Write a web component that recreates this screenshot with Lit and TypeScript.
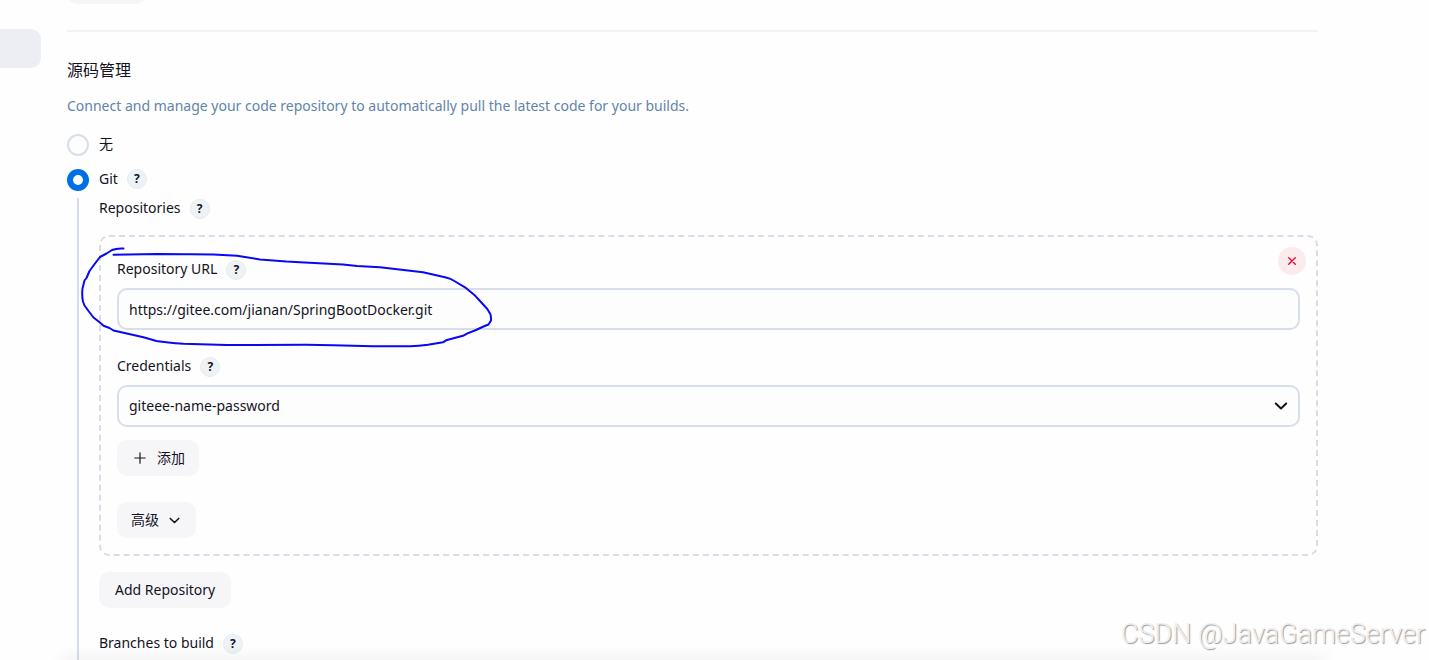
import { LitElement, html, css, svg } from "lit";
import { customElement, property, state } from "lit/decorators.js";

const FONT = css`"Noto Sans", "Noto Sans CJK SC", sans-serif`;

@customElement("help-button")
class HelpButton extends LitElement {
  @property() topic = "";

  static styles = css`
    :host {
      display: block;
    }
    .help {
      display: grid;
      place-items: center;
      box-sizing: border-box;
      width: 20px;
      height: 20px;
      padding: 0;
      border: 1px solid #e6ebef;
      border-radius: 50%;
      background: #eef2f5;
      color: #14141f;
      font: 700 12px/18px ${FONT};
    }
  `;

  render() {
    return html`<button class="help" type="button" aria-label="Help: ${this.topic}">?</button>`;
  }
}

@customElement("app-root")
class AppRoot extends LitElement {
  @state() scm = "git";
  @state() url = "https://gitee.com/jianan/SpringBootDocker.git";

  static styles = css`
    :host {
      display: block;
      position: relative;
      height: 100vh;
      overflow: hidden;
      background: #fefefe;
      color: #14141f;
      font: 400 14px/20px ${FONT};
    }
    .page {
      display: grid;
      grid-template-columns: 41px minmax(0, 1fr);
      column-gap: 26px;
      padding-right: 111px;
    }
    .side {
      padding-top: 29px;
    }
    .side-item {
      display: block;
      height: 39px;
      border-radius: 0 10px 10px 0;
      background: #edeef3;
    }
    .previous {
      display: flex;
      align-items: flex-end;
      height: 4px;
      overflow: hidden;
    }
    .button {
      display: inline-flex;
      flex: none;
      align-items: center;
      box-sizing: border-box;
      height: 36px;
      padding: 0 14px;
      border: 0;
      border-radius: 10px;
      background: #f6f6f9;
      color: inherit;
      font: inherit;
    }
    .button.blank {
      width: 79px;
    }
    .rule {
      height: 2px;
      margin: 26px 0 0;
      border: 0;
      background: #f2f2f7;
    }
    .title {
      margin: 28px 0 0;
      font-size: 16px;
      line-height: 20px;
      font-weight: 400;
    }
    .description {
      margin: 16px 0 0;
      color: #6384a8;
    }
    .choices {
      display: grid;
      gap: 13px;
      margin: 18px 0 0;
      padding: 0;
      border: 0;
    }
    .choice {
      display: flex;
      height: 22px;
    }
    .choice label {
      display: flex;
      gap: 10px;
      margin-right: 9px;
    }
    .radio {
      appearance: none;
      box-sizing: border-box;
      width: 22px;
      height: 22px;
      margin: 0;
      border: 2px solid #d8dee9;
      border-radius: 50%;
      background: #fdfdfe;
    }
    .radio:checked {
      border: 6px solid #006fe6;
      background: #fff;
    }
    .nested {
      margin: 7px 0 0 10px;
      padding: 1px 0 60px 20px;
      border-left: 2px solid #d8dee9;
    }
    .label-row {
      display: flex;
      align-items: center;
      gap: 9px;
      height: 20px;
    }
    .label-row > :first-child {
      line-height: 18px;
      padding-bottom: 2px;
    }
    .repository {
      position: relative;
      margin-top: 16px;
      padding: 23px 16px 16px;
      border: 2px dashed #d8dee9;
      border-radius: 10px;
    }
    .remove {
      position: absolute;
      top: 10px;
      right: 10px;
      display: grid;
      place-items: center;
      width: 28px;
      height: 28px;
      padding: 0;
      border: 0;
      border-radius: 50%;
      background: #fcebed;
      color: #e6002e;
    }
    .field + .field {
      margin-top: 27px;
    }
    .control {
      position: relative;
      display: block;
      margin-top: 8px;
    }
    .input {
      appearance: none;
      display: block;
      box-sizing: border-box;
      width: 100%;
      height: 42px;
      margin: 0;
      padding: 0 10px;
      border: 2px solid #d8dee9;
      border-radius: 10px;
      background: #fdfdfe;
      color: inherit;
      font: inherit;
      outline: 0;
    }
    .arrow {
      position: absolute;
      top: 13px;
      right: 11px;
      pointer-events: none;
    }
    .icon {
      display: block;
      flex: none;
      fill: none;
      stroke: currentColor;
      stroke-linecap: round;
      stroke-linejoin: round;
    }
    .actions {
      display: grid;
      justify-items: start;
      gap: 26px;
      margin-top: 13px;
    }
    .actions .icon {
      margin: 0 1px;
    }
    .actions .button {
      gap: 8px;
    }
    .add-repository {
      margin-top: 16px;
      padding: 0 16px;
    }
    .branches {
      margin-top: 26px;
    }
    .ink {
      position: absolute;
      top: 0;
      left: 0;
      fill: none;
      stroke: #0808f4;
      stroke-width: 2;
      stroke-linecap: round;
      stroke-linejoin: round;
      pointer-events: none;
    }
    .fade {
      position: absolute;
      bottom: 0;
      left: 52px;
      right: 94px;
      height: 14px;
      background: linear-gradient(transparent, rgba(20, 20, 31, 0.035));
      mask-image: linear-gradient(90deg, transparent, #000 20px calc(100% - 20px), transparent);
      pointer-events: none;
    }
    .watermark {
      position: absolute;
      right: 4px;
      bottom: 10px;
      color: #f0f0f0;
      font: 300 27px/32px Roboto, sans-serif;
      text-shadow: 1px 1px 1px #989898;
      pointer-events: none;
    }
  `;

  private chevron(size: number, cls = "") {
    return html`<svg class="icon ${cls}" width=${size} height=${size} viewBox="0 0 16 16" stroke-width="2" aria-hidden="true">
      ${svg`<path d="M2.800 5.500 8 10.500l5.200-5"/>`}
    </svg>`;
  }

  render() {
    return html`
      <div class="page">
        <nav class="side"><a class="side-item" href="#scm" aria-label="源码管理"></a></nav>
        <main>
          <div class="previous"><button class="button blank" type="button" aria-label="高级"></button></div>
          <hr class="rule" />
          <h2 class="title" id="scm">源码管理</h2>
          <p class="description">
            Connect and manage your code repository to automatically pull the latest code for your builds.
          </p>
          <fieldset class="choices" aria-labelledby="scm">
            <div class="choice">
              <label>
                <input class="radio" type="radio" name="scm" .checked=${this.scm === "none"} @change=${() => (this.scm = "none")} />
                <span>无</span>
              </label>
            </div>
            <div class="choice">
              <label>
                <input class="radio" type="radio" name="scm" .checked=${this.scm === "git"} @change=${() => (this.scm = "git")} />
                <span>Git</span>
              </label>
              <help-button topic="Git"></help-button>
            </div>
          </fieldset>
          <div class="nested">
            <div class="label-row"><span>Repositories</span><help-button topic="Repositories"></help-button></div>
            <section class="repository">
              <button class="remove" type="button" aria-label="Delete">
                <svg class="icon" width="10" height="10" viewBox="0 0 10 10" stroke-width="1.300" aria-hidden="true">
                  <path d="M1.700 1.700l6.600 6.600M8.300 1.700 1.700 8.300" />
                </svg>
              </button>
              <div class="field">
                <div class="label-row">
                  <label for="url">Repository URL</label><help-button topic="Repository URL"></help-button>
                </div>
                <div class="control">
                  <input class="input" id="url" type="text" .value=${this.url}
                    @input=${(e: Event) => (this.url = (e.target as HTMLInputElement).value)} />
                </div>
              </div>
              <div class="field">
                <div class="label-row">
                  <label for="credentials">Credentials</label><help-button topic="Credentials"></help-button>
                </div>
                <div class="control">
                  <select class="input" id="credentials"><option>giteee-name-password</option></select>
                  ${this.chevron(16, "arrow")}
                </div>
              </div>
              <div class="actions">
                <button class="button" type="button">
                  <svg class="icon" width="16" height="16" viewBox="0 0 16 16" stroke-width="1.200" aria-hidden="true">
                    <path d="M8 2.800v10.400M2.800 8h10.400" />
                  </svg>
                  添加
                </button>
                <button class="button" type="button">高级 ${this.chevron(13)}</button>
              </div>
            </section>
            <button class="button add-repository" type="button">Add Repository</button>
            <div class="label-row branches">
              <span>Branches to build</span><help-button topic="Branches to build"></help-button>
            </div>
          </div>
        </main>
      </div>
      <div class="fade"></div>
      <svg class="ink" width="500" height="360" viewBox="0 0 500 360" aria-hidden="true">
        <path
          d="M123.500 248.500C119 248.200 115 248.800 112 250L106.500 253.500 100 257 95 263.500 89.500 271 86.500 278 84.500 280.500 82.500 288.500C82 293 82.200 298 83 301.500L84.500 305.500 88.500 311 93.500 317.500 100.500 323 103.500 325.700 109.500 328 113.500 330.500 143.500 337.200 156.500 341C165 342.500 174 343.200 183.500 343.700L226.500 345 306 344.800 333 345.200 373 346.300H410C417 346 422 345.500 428 344.700L443 342.300 446 340.300 463 335.800 467 333.600 476 330 483.500 326.500 488.500 324.500 491 320.500C491.200 318 491 316 490.300 314L487.300 309 480 301 475 295.600 465 287.300 453.500 280.500C451 279 448 278 445 277.300L423 272.300 380 267.300 357 266 343 264.500 300 262.300 286.500 261.600 260 259.500 237 255.700C220 254.700 204 254.200 186.500 254.300L157 254 113.500 254.700"
        />
      </svg>
      <div class="watermark">CSDN @JavaGameServer</div>
    `;
  }
}
